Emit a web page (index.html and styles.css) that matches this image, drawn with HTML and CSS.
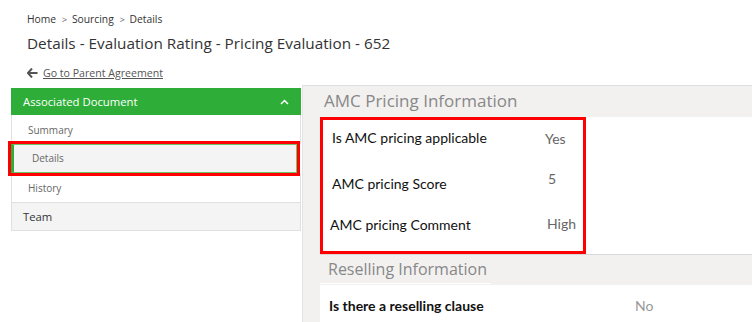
FILE: index.html
```html
<!DOCTYPE html>
<html lang="en">
<head>
    <meta charset="UTF-8">
    <meta name="viewport" content="width=device-width, initial-scale=1.0">
    <title>Pricing Evaluation</title>
    <link rel="stylesheet" href="styles.css">
</head>
<body>

<div class="page-header">
    <div class="breadcrumb">
        <span>Home</span>
        <span class="crumb-sep">&gt;</span>
        <span>Sourcing</span>
        <span class="crumb-sep">&gt;</span>
        <span>Details</span>
    </div>
    <h1 class="page-title">Details - Evaluation Rating - Pricing Evaluation - 652</h1>
    <div class="back-link">
        <svg class="back-arrow" width="11" height="10" viewBox="0 0 11 10">
            <path d="M5 0.5 L0.8 5 L5 9.5 M1 5 H10.5" fill="none" stroke="#555" stroke-width="2"/>
        </svg>
        <a href="#">Go to Parent Agreement</a>
    </div>
</div>

<div class="layout">
    <div class="sidebar">
        <div class="sidebar-header">
            <span>Associated Document</span>
            <svg width="9" height="6" viewBox="0 0 9 6">
                <path d="M1 5 L4.5 1.5 L8 5" fill="none" stroke="#fff" stroke-width="1.5"/>
            </svg>
        </div>
        <div class="sidebar-item">Summary</div>
        <div class="sidebar-item active">Details</div>
        <div class="sidebar-item">History</div>
        <div class="sidebar-section">Team</div>
    </div>

    <div class="content">
        <div class="section-title">AMC Pricing Information</div>
        <div class="section-body">
            <div class="field-box">
                <div class="field field-applicable">
                    <span class="field-label">Is AMC pricing applicable</span>
                    <span class="field-value">Yes</span>
                </div>
                <div class="field field-score">
                    <span class="field-label">AMC pricing Score</span>
                    <span class="field-value">5</span>
                </div>
                <div class="field field-comment">
                    <span class="field-label">AMC pricing Comment</span>
                    <span class="field-value">High</span>
                </div>
            </div>
        </div>

        <div class="section-title section-title-second"><span>Reselling Information</span></div>
        <div class="section-body">
            <div class="plain-field">
                <span class="plain-label">Is there a reselling clause</span>
                <span class="plain-value">No</span>
            </div>
        </div>
    </div>
</div>

</body>
</html>
```

FILE: styles.css
```css
body {
    margin: 0;
    font-family: "Open Sans", "Noto Sans", sans-serif;
    color: #333;
    background: #fff;
    overflow: hidden;
}

.page-header {
    padding: 11px 0 0 27px;
}

.breadcrumb {
    font-size: 10.3px;
    line-height: 16px;
    color: #333;
}

.crumb-sep {
    color: #666;
    margin: 0 2px 0 3px;
    font-size: 9.5px;
}

.page-title {
    margin: 4px 0 0;
    font-size: 15.3px;
    font-weight: normal;
    line-height: 22px;
    color: #333;
}

.back-link {
    display: flex;
    align-items: center;
    gap: 5px;
    margin-top: 11px;
    font-size: 10.6px;
    line-height: 16px;
}

.back-link a {
    color: #555;
    text-decoration: underline;
}

.layout {
    display: flex;
    margin-top: 4px;
}

.sidebar {
    width: 290px;
    margin: 3px 0 0 11px;
    flex-shrink: 0;
    align-self: flex-start;
}

.sidebar-header {
    display: flex;
    justify-content: space-between;
    align-items: center;
    height: 27px;
    padding: 0 12px;
    background: #2eae38;
    color: #fff;
    font-size: 11.3px;
}

.sidebar-item {
    height: 29px;
    line-height: 30px;
    padding-left: 16px;
    font-size: 10px;
    color: #666;
    border-left: 1px solid #e2e2e2;
    border-right: 1px solid #e2e2e2;
    box-sizing: border-box;
}

.sidebar-item.active {
    background: #f4f4f4;
    border: 1px solid #6cc56c;
    border-left: 3px solid #2eae38;
    padding-left: 18px;
    line-height: 27px;
    margin-right: 4px;
    outline: 3px solid #f00;
    position: relative;
}

.sidebar-section {
    height: 27px;
    line-height: 27px;
    padding-left: 11px;
    font-size: 11.3px;
    background: #f4f4f4;
    border: 1px solid #e0e0e0;
    color: #333;
}

.content {
    flex: 1;
    margin-left: 1px;
    background: #f2f1f0;
    border-left: 1px solid #e4e4e4;
    border-top: 1px solid #dedede;
    height: 240px;
}

.section-title {
    height: 31px;
    line-height: 30px;
    padding-left: 21px;
    font-size: 17px;
    color: #888;
}

.section-title-second {
    height: 30px;
    font-size: 16px;
    border-top: 1px solid #d8d8d8;
    margin-left: 17px;
    padding-left: 8px;
    line-height: 27px;
}

.section-title-second span {
    display: inline-block;
    line-height: 28px;
    border-bottom: 1px solid #fff;
    padding-right: 4px;
    margin-left: -8px;
    padding-left: 8px;
}

.section-body {
    margin-left: 17px;
    background: #fff;
}

.field-box {
    width: 260px;
    height: 131px;
    border: 3px solid #f00;
    font-family: Lato, "Open Sans", sans-serif;
    font-size: 14px;
    color: #111;
}

.field {
    display: flex;
    height: 44px;
}

.field-label {
    width: 213px;
    padding-left: 9px;
}

.field-value {
    color: #666;
}

.field-applicable {
    padding-top: 9px;
    height: 38px;
}

.field-applicable .field-value {
    margin-top: 1px;
}

.field-score {
    padding-top: 8px;
    height: 40px;
}

.field-score .field-value {
    margin-top: -5px;
    padding-left: 3px;
}

.field-comment {
    padding-top: 1px;
}

.field-comment .field-label {
    padding-left: 7px;
    width: 215px;
}

.field-comment .field-value {
    margin-top: -1px;
    padding-left: 2px;
}

.plain-field {
    display: flex;
    height: 40px;
    align-items: center;
    font-family: Lato, "Open Sans", sans-serif;
    font-size: 14px;
}

.plain-label {
    width: 306px;
    padding-left: 9px;
    color: #111;
    font-weight: bold;
}

.plain-value {
    color: #999;
}
```
